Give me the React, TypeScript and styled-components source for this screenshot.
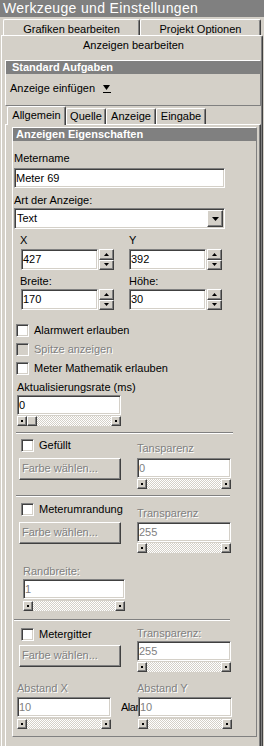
import React from 'react';
import styled, { createGlobalStyle, css } from 'styled-components';

const GlobalStyle = createGlobalStyle`
  html, body { margin: 0; padding: 0; background: #d4d0c8; }
  body { font-family: "Liberation Sans", Arial, sans-serif; font-size: 11px; color: #000; }
  * { box-sizing: border-box; }
`;

const sunken = css`
  border: 1px solid;
  border-color: #808080 #ffffff #ffffff #808080;
  box-shadow: inset 1px 1px 0 #404040, inset -1px -1px 0 #d4d0c8;
`;

const raised = css`
  border: 1px solid;
  border-color: #ffffff #404040 #404040 #ffffff;
  box-shadow: inset -1px -1px 0 #808080, inset 1px 1px 0 #d4d0c8;
`;

const disabledText = css`
  color: #808080;
  text-shadow: 1px 1px 0 #ffffff;
`;

type Spacing = { $ml?: number; $mt?: number };
const spacing = css<Spacing>`
  margin-left: ${(p) => p.$ml ?? 0}px;
  margin-top: ${(p) => p.$mt ?? 0}px;
`;

const Root = styled.div`
  width: 264px;
  height: 746px;
  overflow: hidden;
  background: #d4d0c8;
  display: flex;
  flex-direction: column;
`;

const TitleBar = styled.div`
  height: 17px;
  flex: none;
  background: #808080;
  color: #ffffff;
  font-size: 14px;
  letter-spacing: 0.35px;
  line-height: 16px;
  padding-left: 3px;
  white-space: nowrap;
`;

const BackRow = styled.div`
  display: flex;
  flex: none;
  height: 16px;
  margin-top: 2px;
  padding-left: 3px;
`;

const BackTab = styled.div<{ $w: number }>`
  width: ${(p) => p.$w}px;
  height: 16px;
  border-top: 1px solid #ffffff;
  border-left: 1px solid #ffffff;
  border-right: 1px solid #404040;
  box-shadow: inset -1px 0 0 #808080;
  border-top-left-radius: 2px;
  border-top-right-radius: 2px;
  padding-top: 3px;
  line-height: 13px;
  text-align: center;
  white-space: nowrap;
`;

const OuterPanel = styled.div`
  flex: 1;
  min-height: 0;
  width: 262px;
  margin-left: 1px;
  border-top: 1px solid #ffffff;
  border-left: 1px solid #ffffff;
  border-right: 1px solid #404040;
  border-top-right-radius: 2px;
  box-shadow: inset -1px 0 0 #808080;
  padding-left: 3px;
  display: flex;
  flex-direction: column;
`;

const ActiveTabLabel = styled.div`
  height: 24px;
  line-height: 19px;
  text-align: center;
  white-space: nowrap;
`;

const Group = styled.div<{ $w: number }>`
  width: ${(p) => p.$w}px;
  border: 1px solid;
  border-color: #ffffff #808080 #808080 #ffffff;
  display: flex;
  flex-direction: column;
`;

const GroupHeader = styled.div<{ $pl: number }>`
  height: 13px;
  background: #808080;
  color: #ffffff;
  font-weight: bold;
  line-height: 13px;
  padding-left: ${(p) => p.$pl}px;
  white-space: nowrap;
`;

const TaskBody = styled.div`
  height: 31px;
  padding: 8px 0 0 4px;
  display: flex;
  align-items: flex-start;
  gap: 8px;
  line-height: 13px;
`;

const DropGlyph = styled.svg`
  margin-top: 3px;
  flex: none;
`;

const InnerTabStrip = styled.div`
  display: flex;
  align-items: flex-end;
  height: 18px;
  flex: none;
  padding-left: 2px;
  position: relative;
  z-index: 1;
`;

const InnerTab = styled.div<{ $w: number; $active?: boolean }>`
  width: ${(p) => p.$w}px;
  height: ${(p) => (p.$active ? 19 : 16)}px;
  margin-bottom: ${(p) => (p.$active ? -1 : 0)}px;
  background: #d4d0c8;
  border-top: 1px solid #ffffff;
  border-left: 1px solid #ffffff;
  border-right: 1px solid #404040;
  box-shadow: inset -1px 0 0 #808080;
  border-top-left-radius: 2px;
  border-top-right-radius: 2px;
  padding-top: ${(p) => (p.$active ? 2 : 1)}px;
  line-height: 13px;
  text-align: center;
  white-space: nowrap;
`;

const InnerPanel = styled.div`
  flex: 1;
  width: 256px;
  border-top: 1px solid #ffffff;
  border-left: 1px solid #ffffff;
  border-right: 1px solid #404040;
  box-shadow: inset -1px 0 0 #808080;
  padding: 2px 0 0 6px;
`;

const PropBody = styled.div`
  display: flex;
  flex-direction: column;
  align-items: flex-start;
  padding-bottom: 7px;
`;

const Label = styled.div<Spacing & { $disabled?: boolean; $w?: number }>`
  ${spacing};
  height: 13px;
  line-height: 13px;
  white-space: nowrap;
  flex: none;
  ${(p) => (p.$w ? `width: ${p.$w}px;` : '')}
  ${(p) => (p.$disabled ? disabledText : '')}
`;

const ClippedLabel = styled.div<Spacing & { $w: number }>`
  ${spacing};
  width: ${(p) => p.$w}px;
  height: 20px;
  line-height: 20px;
  letter-spacing: -0.5px;
  overflow: hidden;
  white-space: nowrap;
  flex: none;
`;

const TextBox = styled.div<Spacing & { $w: number; $h?: number; $disabled?: boolean }>`
  ${spacing};
  ${sunken};
  width: ${(p) => p.$w}px;
  height: ${(p) => p.$h ?? 20}px;
  line-height: ${(p) => (p.$h ?? 20) - 2}px;
  background: #ffffff;
  padding-left: 1px;
  white-space: nowrap;
  overflow: hidden;
  flex: none;
  color: ${(p) => (p.$disabled ? '#808080' : '#000000')};
`;

const Select = styled.div<Spacing & { $w: number }>`
  ${spacing};
  ${sunken};
  width: ${(p) => p.$w}px;
  height: 21px;
  background: #ffffff;
  display: flex;
  align-items: center;
  padding: 1px;
  line-height: 17px;
`;

const SelectText = styled.span`
  flex: 1;
  padding-left: 1px;
`;

const ArrowButton = styled.div<{ $w: number; $h?: number }>`
  ${raised};
  width: ${(p) => p.$w}px;
  height: ${(p) => (p.$h ? `${p.$h}px` : 'auto')};
  flex: ${(p) => (p.$h ? 'none' : '1')};
  background: #d4d0c8;
  display: flex;
  align-items: center;
  justify-content: center;
`;

const Row = styled.div<Spacing & { $gap?: number }>`
  ${spacing};
  display: flex;
  align-items: flex-start;
  gap: ${(p) => p.$gap ?? 0}px;
`;

const Column = styled.div<Spacing & { $w?: number }>`
  ${spacing};
  display: flex;
  flex-direction: column;
  align-items: flex-start;
  ${(p) => (p.$w ? `width: ${p.$w}px;` : '')}
  flex: none;
`;

const SpinWrap = styled.div`
  display: flex;
  gap: 1px;
  flex: none;
`;

const SpinButtons = styled.div`
  display: flex;
  flex-direction: column;
  width: 15px;
  height: 21px;
`;

const CheckRow = styled.div<Spacing & { $disabled?: boolean }>`
  ${spacing};
  display: flex;
  align-items: center;
  gap: 5px;
  height: 13px;
  line-height: 13px;
  white-space: nowrap;
  ${(p) => (p.$disabled ? disabledText : '')}
`;

const CheckBox = styled.span<{ $disabled?: boolean }>`
  ${sunken};
  width: 13px;
  height: 13px;
  flex: none;
  background: ${(p) => (p.$disabled ? '#d4d0c8' : '#ffffff')};
  text-shadow: none;
`;

const SliderTrack = styled.div<Spacing & { $w: number }>`
  ${spacing};
  width: ${(p) => p.$w}px;
  height: 10px;
  flex: none;
  display: flex;
  background-color: #ffffff;
  background-image: repeating-conic-gradient(#d4d0c8 0 25%, #ffffff 0 50%);
  background-size: 2px 2px;
`;

const SliderButton = styled.div`
  ${raised};
  width: 10px;
  height: 10px;
  flex: none;
  background: #d4d0c8;
  display: flex;
  align-items: center;
  justify-content: center;
  &::after {
    content: '';
    width: 2px;
    height: 2px;
    background: #000000;
  }
`;

const SliderThumb = styled.div`
  ${raised};
  width: 10px;
  height: 10px;
  flex: none;
  background: #d4d0c8;
`;

const SliderGap = styled.div`
  flex: 1;
`;

const PushButton = styled.div<Spacing & { $w: number }>`
  ${spacing};
  ${raised};
  ${disabledText};
  width: ${(p) => p.$w}px;
  height: 22px;
  background: #d4d0c8;
  line-height: 18px;
  padding-left: 2px;
  white-space: nowrap;
  flex: none;
`;

const Separator = styled.div<Spacing & { $w: number }>`
  ${spacing};
  width: ${(p) => p.$w}px;
  height: 2px;
  border-top: 1px solid #808080;
  border-bottom: 1px solid #ffffff;
  flex: none;
`;

const Tri = ({ up, w = 7, h = 4 }: { up?: boolean; w?: number; h?: number }) => (
  <svg width={w} height={h} viewBox={`0 0 ${w} ${h}`}>
    <polygon points={up ? `0,${h} ${w},${h} ${w / 2},0` : `0,0 ${w},0 ${w / 2},${h}`} fill="#000" />
  </svg>
);

const Spin = ({ value }: { value: string }) => (
  <SpinWrap>
    <TextBox $w={77} $h={21}>{value}</TextBox>
    <SpinButtons>
      <ArrowButton $w={15}>
        <Tri up w={5} h={3} />
      </ArrowButton>
      <ArrowButton $w={15}>
        <Tri w={5} h={3} />
      </ArrowButton>
    </SpinButtons>
  </SpinWrap>
);

const Slider = ({ w, thumb, ml, mt }: { w: number; thumb?: boolean; ml?: number; mt?: number }) => (
  <SliderTrack $w={w} $ml={ml} $mt={mt}>
    <SliderButton />
    {thumb && <SliderThumb />}
    <SliderGap />
    <SliderButton />
  </SliderTrack>
);

export default function App() {
  return (
    <>
      <GlobalStyle />
      <Root>
        <TitleBar>Werkzeuge und Einstellungen</TitleBar>
        <BackRow>
          <BackTab $w={137}>Grafiken bearbeiten</BackTab>
          <BackTab $w={121}>Projekt Optionen</BackTab>
        </BackRow>
        <OuterPanel>
          <ActiveTabLabel>Anzeigen bearbeiten</ActiveTabLabel>
          <Group $w={256}>
            <GroupHeader $pl={6}>Standard Aufgaben</GroupHeader>
            <TaskBody>
              <span>Anzeige einfügen</span>
              <DropGlyph width={8} height={9} viewBox="0 0 8 9">
                <polygon points="0,0 7,0 3.5,5" fill="#000" />
                <rect x="0" y="7" width="8" height="1" fill="#000" />
              </DropGlyph>
            </TaskBody>
          </Group>
          <InnerTabStrip>
            <InnerTab $active $w={59}>Allgemein</InnerTab>
            <InnerTab $w={40}>Quelle</InnerTab>
            <InnerTab $w={50}>Anzeige</InnerTab>
            <InnerTab $w={50}>Eingabe</InnerTab>
          </InnerTabStrip>
          <InnerPanel>
            <Group $w={245}>
              <GroupHeader $pl={3}>Anzeigen Eigenschaften</GroupHeader>
              <PropBody>
                <Label $ml={1} $mt={11}>Metername</Label>
                <TextBox $ml={1} $mt={3} $w={211}>Meter 69</TextBox>
                <Label $ml={1} $mt={6}>Art der Anzeige:</Label>
                <Select $ml={1} $mt={1} $w={211}>
                  <SelectText>Text</SelectText>
                  <ArrowButton $w={16} $h={17}>
                    <Tri />
                  </ArrowButton>
                </Select>

                <Row $ml={7} $mt={5}>
                  <Label $w={109}>X</Label>
                  <Label>Y</Label>
                </Row>
                <Row $ml={8} $mt={2} $gap={15}>
                  <Spin value="427" />
                  <Spin value="392" />
                </Row>
                <Row $ml={7} $mt={5}>
                  <Label $w={109}>Breite:</Label>
                  <Label>Höhe:</Label>
                </Row>
                <Row $ml={8} $mt={1} $gap={15}>
                  <Spin value="170" />
                  <Spin value="30" />
                </Row>

                <CheckRow $ml={3} $mt={14}>
                  <CheckBox />
                  Alarmwert erlauben
                </CheckRow>
                <CheckRow $ml={3} $mt={6} $disabled>
                  <CheckBox $disabled />
                  Spitze anzeigen
                </CheckRow>
                <CheckRow $ml={3} $mt={6}>
                  <CheckBox />
                  Meter Mathematik erlauben
                </CheckRow>

                <Label $ml={4} $mt={6}>Aktualisierungsrate (ms)</Label>
                <TextBox $ml={4} $mt={1} $w={104}>0</TextBox>
                <Slider ml={4} mt={1} w={104} thumb />

                <Separator $ml={3} $mt={6} $w={217} />

                <Row $ml={6} $mt={5} $gap={16}>
                  <Column $w={102}>
                    <CheckRow $ml={2}>
                      <CheckBox />
                      Gefüllt
                    </CheckRow>
                    <PushButton $mt={6} $w={102}>Farbe wählen...</PushButton>
                  </Column>
                  <Column $w={94}>
                    <Label $mt={3} $disabled>Tansparenz</Label>
                    <TextBox $mt={3} $w={94} $disabled>0</TextBox>
                    <Slider mt={1} w={94} />
                  </Column>
                </Row>

                <Separator $ml={3} $mt={6} $w={214} />

                <Row $ml={6} $mt={6} $gap={16}>
                  <Column $w={102}>
                    <CheckRow $ml={2}>
                      <CheckBox />
                      Meterumrandung
                    </CheckRow>
                    <PushButton $mt={6} $w={102}>Farbe wählen...</PushButton>
                  </Column>
                  <Column $w={94}>
                    <Label $mt={4} $disabled>Transparenz</Label>
                    <TextBox $mt={2} $w={94} $disabled>255</TextBox>
                    <Slider mt={1} w={94} />
                  </Column>
                </Row>
                <Label $ml={10} $mt={12} $disabled>Randbreite:</Label>
                <TextBox $ml={10} $mt={1} $w={102} $disabled>1</TextBox>
                <Slider ml={10} mt={2} w={102} />

                <Separator $ml={1} $mt={8} $w={216} />

                <Row $ml={6} $mt={6} $gap={16}>
                  <Column $w={102}>
                    <CheckRow $ml={2} $mt={1}>
                      <CheckBox />
                      Metergitter
                    </CheckRow>
                    <PushButton $mt={4} $w={102}>Farbe wählen...</PushButton>
                  </Column>
                  <Column $w={94}>
                    <Label $disabled>Transparenz:</Label>
                    <TextBox $mt={1} $w={94} $disabled>255</TextBox>
                    <Slider mt={1} w={94} />
                  </Column>
                </Row>

                <Row $ml={4} $mt={10}>
                  <Label $w={120} $disabled>Abstand X</Label>
                  <Label $disabled>Abstand Y</Label>
                </Row>
                <Row $ml={4} $mt={2}>
                  <TextBox $w={94} $disabled>10</TextBox>
                  <ClippedLabel $ml={10} $w={17}>Alar</ClippedLabel>
                  <TextBox $w={94} $disabled>10</TextBox>
                </Row>
                <Row $ml={4} $mt={2} $gap={27}>
                  <Slider w={94} />
                  <Slider w={94} />
                </Row>
              </PropBody>
            </Group>
          </InnerPanel>
        </OuterPanel>
      </Root>
    </>
  );
}
